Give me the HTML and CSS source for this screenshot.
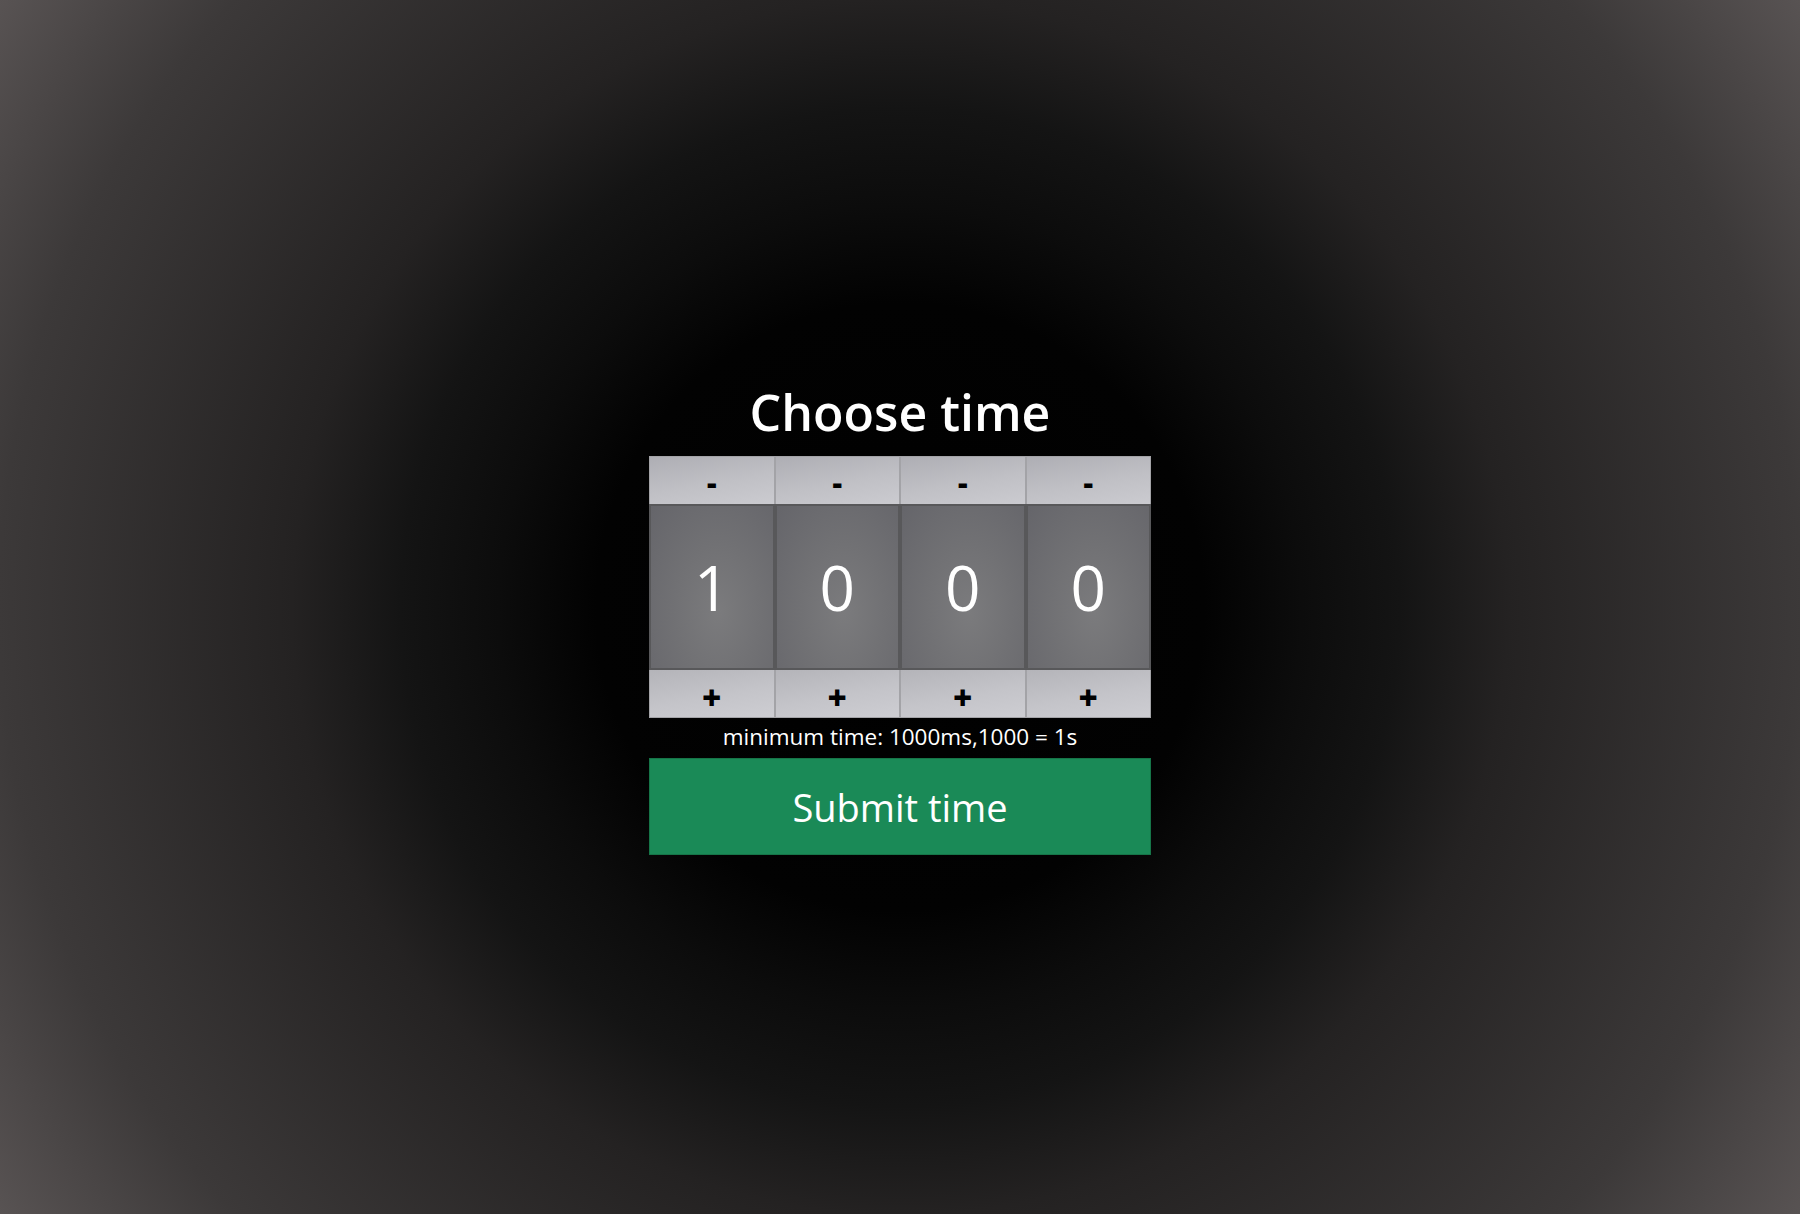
FILE: index.html
```html
<!DOCTYPE html>
<html>
<head>
<meta charset="utf-8">
<title>Choose time</title>
<link rel="stylesheet" href="styles.css">
</head>
<body>
<main class="page">
  <h1 class="title">Choose time</h1>
  <div class="picker">
    <div class="col">
      <button class="step minus">-</button>
      <div class="digit">1</div>
      <button class="step plus">+</button>
    </div>
    <div class="col">
      <button class="step minus">-</button>
      <div class="digit">0</div>
      <button class="step plus">+</button>
    </div>
    <div class="col">
      <button class="step minus">-</button>
      <div class="digit">0</div>
      <button class="step plus">+</button>
    </div>
    <div class="col">
      <button class="step minus">-</button>
      <div class="digit">0</div>
      <button class="step plus">+</button>
    </div>
  </div>
  <p class="note">minimum time: 1000ms,1000 = 1s</p>
  <button class="submit">Submit time</button>
</main>
</body>
</html>
```

FILE: styles.css
```css
html, body {
  margin: 0;
  padding: 0;
  height: 100%;
}
body {
  font-family: "Open Sans", "Noto Sans", sans-serif;
  background: radial-gradient(circle farthest-corner at 50% 50%,
    #000 0%, #020202 28%, #0c0c0c 37%, #141414 46%, #242222 56%, #3c3939 83%, #585353 100%);
  color: #fff;
}
.page {
  box-sizing: border-box;
  height: 100%;
  padding-top: 21px;
  display: flex;
  flex-direction: column;
  align-items: center;
  justify-content: center;
}
.title {
  margin: 0 0 12px;
  font-size: 50px;
  font-weight: 600;
  line-height: 64px;
}
.picker {
  display: grid;
  grid-template-columns: repeat(4, 125.5px);
  width: 502px;
}
.col {
  display: flex;
  flex-direction: column;
}
.step {
  height: 48px;
  margin: 0;
  padding: 0;
  border: 1px solid #a3a3a7;
  background: linear-gradient(170deg, #aeaeb4 0%, #c0c0c5 55%, #cbcbd0 100%);
  color: #000;
  font-family: "Open Sans", sans-serif;
  font-weight: 800;
  line-height: 1;
  cursor: pointer;
}
.step.minus {
  font-size: 30px;
  padding-top: 5px;
  border-bottom: none;
}
.step.plus {
  font-size: 33px;
  padding-top: 7px;
  border-top: none;
  background: linear-gradient(170deg, #b4b4b9 0%, #c4c4c9 55%, #cdcdd2 100%);
}
.digit {
  height: 166px;
  box-sizing: border-box;
  border: 2px solid #58585a;
  background: radial-gradient(ellipse at 55% 65%, #7b7b7d 0%, #717174 45%, #65656a 100%);
  display: flex;
  align-items: center;
  justify-content: center;
  font-size: 62px;
  font-weight: 400;
  color: #fff;
}
.note {
  margin: 4px 0 6px;
  font-size: 22.5px;
  line-height: 30px;
}
.submit {
  width: 502px;
  height: 97px;
  margin: 0;
  border: 1px solid #167548;
  background: #1a8a57;
  color: #fff;
  font-family: "Open Sans", sans-serif;
  font-size: 38px;
  font-weight: 400;
  cursor: pointer;
}
```
